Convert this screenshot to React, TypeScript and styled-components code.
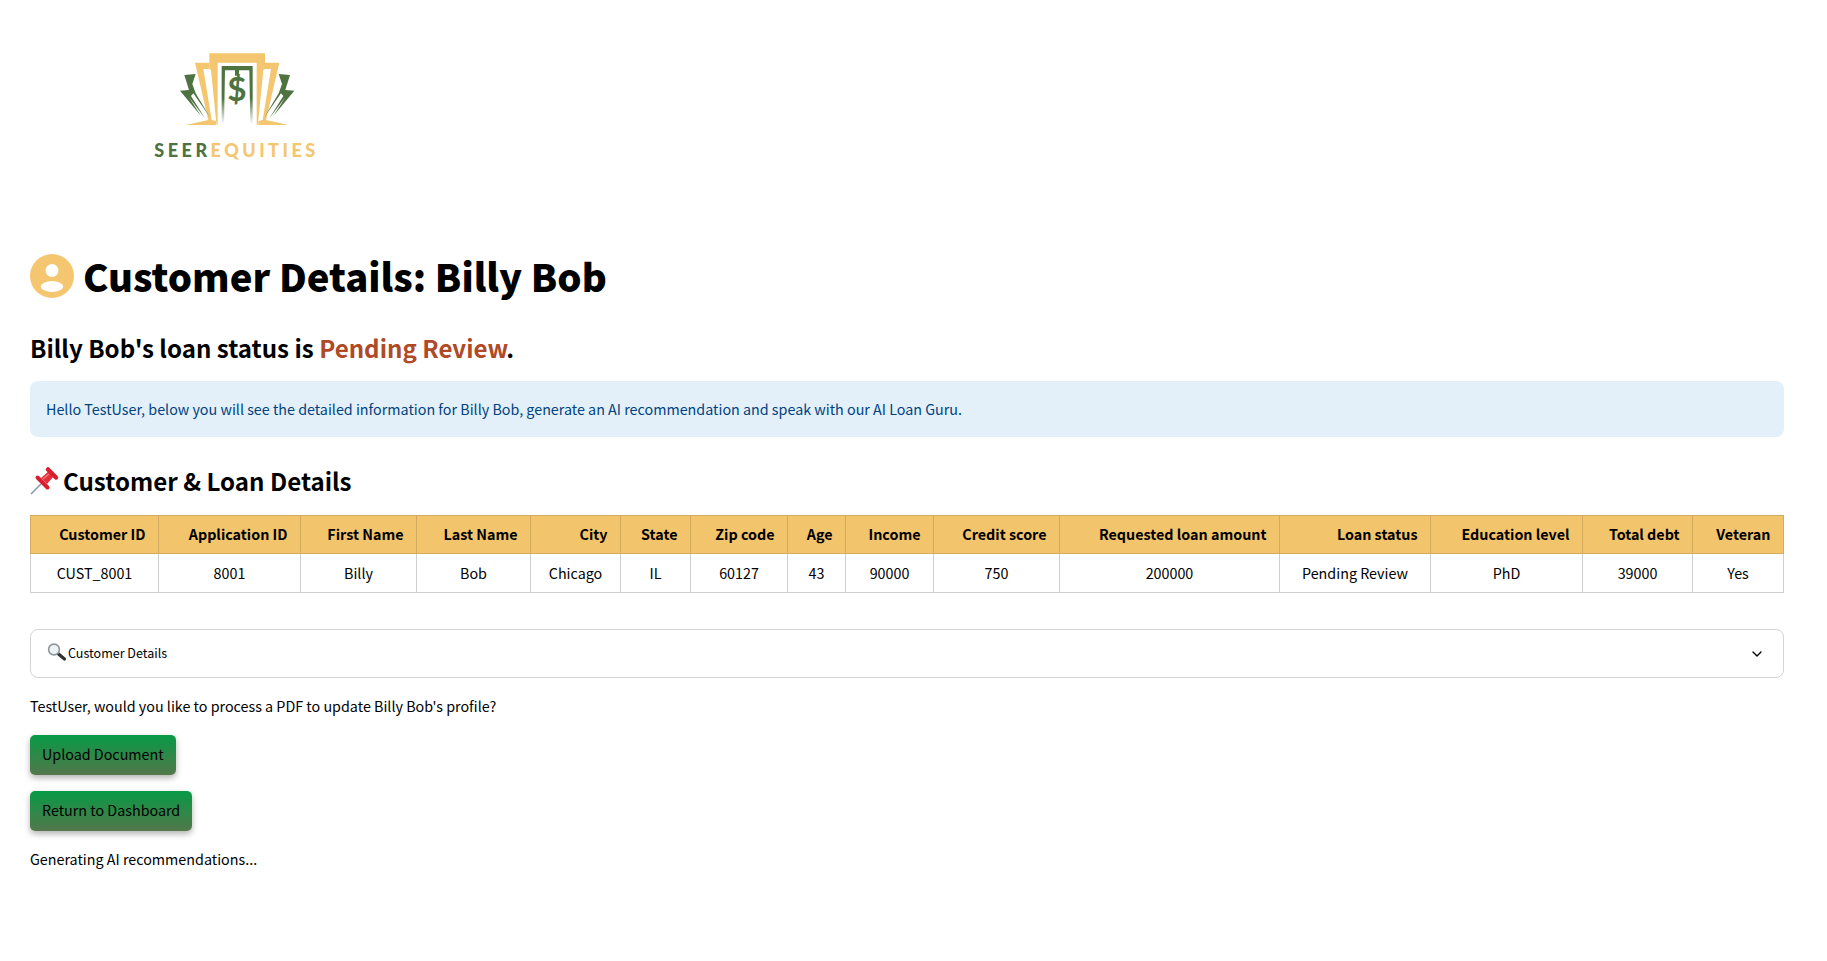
import React from 'react';
import styled, { createGlobalStyle } from 'styled-components';
import { ChevronDown } from 'lucide-react';

const GlobalStyle = createGlobalStyle`
  html, body {
    margin: 0;
    background: #fff;
    color: #000;
    font-family: 'Noto Sans CJK SC', 'Noto Sans', sans-serif;
  }
`;

const Page = styled.div`
  width: 1754px;
  padding: 45px 43px 60px 30px;
`;

const Brand = styled.div`
  width: 190px;
  margin-left: 115px;
  display: flex;
  flex-direction: column;
  align-items: center;
`;

const Wordmark = styled.div`
  margin: 6px 0 0 -7px;
  font-family: 'Lato', sans-serif;
  font-weight: 900;
  font-size: 18px;
  line-height: 18px;
  letter-spacing: 3.5px;
  white-space: nowrap;
  color: #f3c66f;
  span {
    color: #4f7340;
  }
`;

const Title = styled.h1`
  margin: 87px 0 0;
  height: 60px;
  display: flex;
  align-items: center;
  gap: 9px;
  font-size: 38.2px;
  line-height: 60px;
  font-weight: 900;
`;

const Status = styled.h2`
  margin: 22px 0 0;
  font-size: 24.1px;
  line-height: 40px;
  font-weight: 600;
  span {
    color: #b04a26;
  }
`;

const Alert = styled.div`
  margin-top: 13px;
  height: 56px;
  padding: 0 16px 2px;
  box-sizing: border-box;
  display: flex;
  align-items: center;
  border-radius: 8px;
  background: #e3f0fa;
  color: #004280;
  font-size: 14.32px;
`;

const SectionTitle = styled.h3`
  margin: 24px 0 0;
  display: flex;
  align-items: center;
  gap: 3px;
  font-size: 24.1px;
  line-height: 40px;
  font-weight: 600;
`;

const Table = styled.table`
  margin-top: 14px;
  width: 1753px;
  table-layout: fixed;
  border-collapse: collapse;
  font-size: 14.32px;
`;

const Col = styled.col<{ $w: number }>`
  width: ${(p) => p.$w}px;
`;

const HeadCell = styled.th`
  height: 35px;
  padding: 0 12.5px 2px 0;
  background: #f2c56d;
  border: 1px solid #d3aa5e;
  text-align: right;
  font-weight: 700;
  white-space: nowrap;
`;

const Cell = styled.td`
  height: 36px;
  padding: 0 0 2px;
  border: 1px solid #cfcfcf;
  text-align: center;
  white-space: nowrap;
`;

const Expander = styled.div`
  margin-top: 36px;
  height: 47px;
  padding: 0 18px 0 16px;
  display: flex;
  align-items: center;
  justify-content: space-between;
  border: 1px solid #d4d4d6;
  border-radius: 8px;
  font-size: 12.53px;
`;

const ExpanderLabel = styled.div`
  display: flex;
  align-items: center;
  gap: 1px;
  line-height: 20px;
  padding-bottom: 1px;
`;

const Text = styled.p`
  margin: 16px 0 0;
  font-size: 14.32px;
  line-height: 24px;
`;

const ActionButton = styled.button`
  display: block;
  margin-top: 17px;
  height: 40px;
  padding: 0 12px 4px;
  border: none;
  border-radius: 5px;
  background: linear-gradient(180deg, #079a45 0%, #53774b 100%);
  box-shadow: 0 3px 6px rgba(0, 0, 0, 0.3);
  color: #000;
  font-family: inherit;
  font-size: 14.32px;

  & + & {
    margin-top: 16px;
  }
`;

const columns = [
  ['Customer ID', 'CUST_8001', 128],
  ['Application ID', '8001', 142],
  ['First Name', 'Billy', 116],
  ['Last Name', 'Bob', 114],
  ['City', 'Chicago', 90],
  ['State', 'IL', 70],
  ['Zip code', '60127', 97],
  ['Age', '43', 58],
  ['Income', '90000', 88],
  ['Credit score', '750', 126],
  ['Requested loan amount', '200000', 220],
  ['Loan status', 'Pending Review', 151],
  ['Education level', 'PhD', 152],
  ['Total debt', '39000', 110],
  ['Veteran', 'Yes', 91],
] as const;

const Logo = () => (
  <svg width="140" height="90" viewBox="0 0 420 270">
    <defs>
      <linearGradient id="fade" x1="0" y1="0" x2="0" y2="1">
        <stop offset="0.55" stopColor="#4f7340" />
        <stop offset="1" stopColor="#4f7340" stopOpacity="0" />
      </linearGradient>
    </defs>
    <g fill="#f3c66f">
      <polygon points="118,25 285,25 285,72 280,75 265,225 263,240 260,240 260,53 143,53 143,240 140,240 138,225 123,75 118,72" />
      <polygon points="75,53 118,53 118,72 100,72 125,225 138,228 138,240 47,240 115,225" />
      <polygon points="328,53 285,53 285,72 303,72 278,225 265,228 265,240 356,240 288,225" />
    </g>
    <polygon
      fill="url(#fade)"
      points="155,63 248,63 248,238 241,238 238,76 207,76 207,92 195,92 195,76 165,76 162,238 155,238"
    />
    <text x="201" y="168" textAnchor="middle" fontFamily="Lato, sans-serif" fontWeight="700" fontSize="100" fill="#4f7340">
      $
    </text>
    <g fill="#4f7340">
      <polygon points="43,90 77,87 67,117 77,145 120,217 70,145 63,153 105,220 57,157 93,213 30,137 57,135" />
      <polygon points="360,90 326,87 336,117 326,145 283,217 333,145 340,153 298,220 346,157 310,213 373,137 346,135" />
    </g>
  </svg>
);

const Avatar = () => (
  <svg width="44" height="44" viewBox="0 0 44 44">
    <circle cx="22" cy="22" r="22" fill="#f3c66f" />
    <circle cx="22" cy="16.5" r="6.5" fill="#fff" />
    <ellipse cx="22" cy="32.5" rx="11.2" ry="5.4" fill="#fff" />
  </svg>
);

const Pin = () => (
  <svg width="30" height="30" viewBox="0 0 30 30">
    <line x1="1" y1="28" x2="11" y2="18" stroke="#7f93a6" strokeWidth="1.5" />
    <line x1="7.5" y1="11.5" x2="17.5" y2="21.5" stroke="#d91f2e" strokeWidth="4" strokeLinecap="round" />
    <polygon points="11,12 17,18 24,10 19,5" fill="#e5303c" />
    <line x1="18" y1="3.5" x2="26" y2="11.5" stroke="#d91f2e" strokeWidth="4.5" strokeLinecap="round" />
    <line x1="13" y1="13" x2="19" y2="8" stroke="#f47a80" strokeWidth="1.4" />
  </svg>
);

const Magnifier = () => (
  <svg width="20" height="20" viewBox="0 0 20 20">
    <line x1="11.5" y1="11" x2="17.5" y2="16" stroke="#2e3033" strokeWidth="3.2" strokeLinecap="round" />
    <circle cx="7" cy="6.5" r="5.4" fill="#eef3f6" stroke="#8f979e" strokeWidth="1.6" />
  </svg>
);

const App = () => (
  <Page>
    <GlobalStyle />
    <Brand>
      <Logo />
      <Wordmark>
        <span>SEER</span>EQUITIES
      </Wordmark>
    </Brand>
    <Title>
      <Avatar />
      Customer Details: Billy Bob
    </Title>
    <Status>
      Billy Bob's loan status is <span>Pending Review</span>.
    </Status>
    <Alert>
      Hello TestUser, below you will see the detailed information for Billy Bob, generate an AI recommendation and speak
      with our AI Loan Guru.
    </Alert>
    <SectionTitle>
      <Pin />
      Customer &amp; Loan Details
    </SectionTitle>
    <Table>
      <colgroup>
        {columns.map(([name, , w]) => (
          <Col key={name} $w={w} />
        ))}
      </colgroup>
      <thead>
        <tr>
          {columns.map(([name]) => (
            <HeadCell key={name}>{name}</HeadCell>
          ))}
        </tr>
      </thead>
      <tbody>
        <tr>
          {columns.map(([name, value]) => (
            <Cell key={name}>{value}</Cell>
          ))}
        </tr>
      </tbody>
    </Table>
    <Expander>
      <ExpanderLabel>
        <Magnifier />
        Customer Details
      </ExpanderLabel>
      <ChevronDown size={16} strokeWidth={2} />
    </Expander>
    <Text>TestUser, would you like to process a PDF to update Billy Bob's profile?</Text>
    <ActionButton>Upload Document</ActionButton>
    <ActionButton>Return to Dashboard</ActionButton>
    <Text>Generating AI recommendations...</Text>
  </Page>
);

export default App;
